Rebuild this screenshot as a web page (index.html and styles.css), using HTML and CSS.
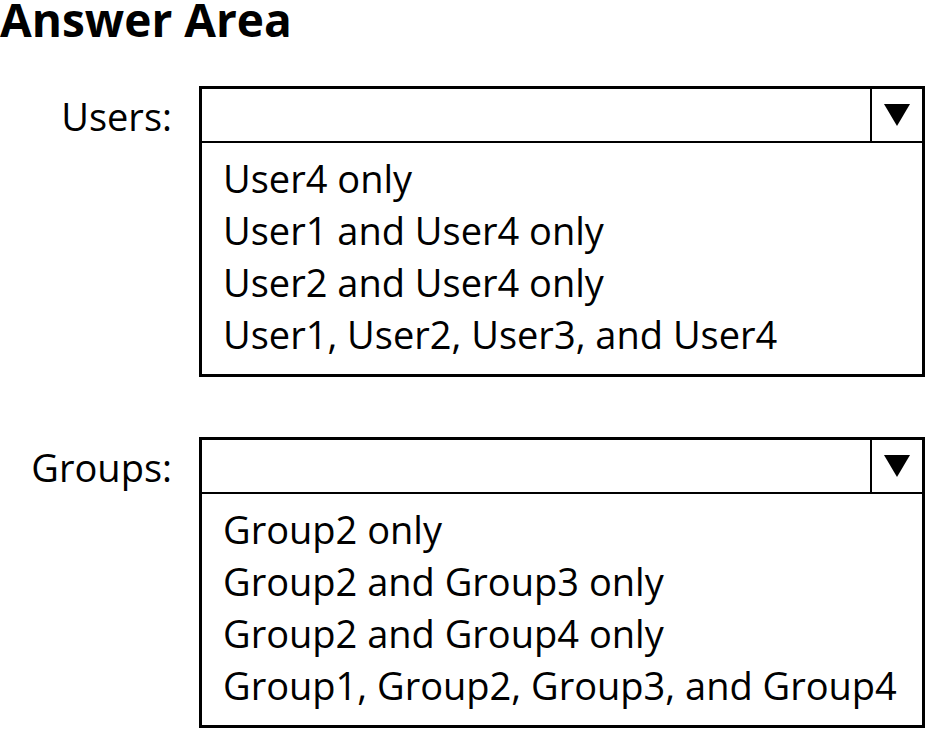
FILE: index.html
```html
<!DOCTYPE html>
<html lang="en">
<head>
    <meta charset="UTF-8">
    <meta name="viewport" content="width=device-width, initial-scale=1.0">
    <title>Answer Area</title>
    <link rel="stylesheet" href="styles.css">
</head>
<body>

    <h1 class="title">Answer Area</h1>

    <div class="answer-row">
        <div class="answer-label">Users:</div>
        <div class="dropdown">
            <div class="dropdown-head">
                <div class="dropdown-value"></div>
                <div class="dropdown-arrow">
                    <svg width="26" height="22" viewBox="0 0 26 22"><polygon points="0,0 26,0 13,22" fill="#000"/></svg>
                </div>
            </div>
            <ul class="dropdown-options">
                <li>User4 only</li>
                <li>User1 and User4 only</li>
                <li>User2 and User4 only</li>
                <li>User1, User2, User3, and User4</li>
            </ul>
        </div>
    </div>

    <div class="answer-row">
        <div class="answer-label">Groups:</div>
        <div class="dropdown">
            <div class="dropdown-head">
                <div class="dropdown-value"></div>
                <div class="dropdown-arrow">
                    <svg width="26" height="22" viewBox="0 0 26 22"><polygon points="0,0 26,0 13,22" fill="#000"/></svg>
                </div>
            </div>
            <ul class="dropdown-options">
                <li>Group2 only</li>
                <li>Group2 and Group3 only</li>
                <li>Group2 and Group4 only</li>
                <li>Group1, Group2, Group3, and Group4</li>
            </ul>
        </div>
    </div>

</body>
</html>
```

FILE: styles.css
```css
body {
    font-family: "Open Sans", "Noto Sans", sans-serif;
    background-color: #fff;
    color: #000;
    margin: 0;
    padding: 0;
}

.title {
    font-size: 46px;
    font-weight: 700;
    line-height: 38px;
    margin: 0 0 48px 0;
}

.answer-row {
    display: grid;
    grid-template-columns: 172px 726px;
    column-gap: 27px;
    align-items: start;
    margin-bottom: 60px;
    font-size: 38px;
}

.answer-row:last-child {
    margin-bottom: 0;
}

.answer-label {
    height: 55px;
    display: flex;
    align-items: center;
    justify-content: flex-end;
    padding-top: 2px;
}

.dropdown {
    border: 3px solid #000;
}

.dropdown-head {
    display: flex;
    height: 52px;
    border-bottom: 2px solid #000;
}

.dropdown-value {
    flex: 1;
}

.dropdown-arrow {
    width: 50px;
    border-left: 2px solid #000;
    display: flex;
    align-items: center;
    justify-content: center;
}

.dropdown-options {
    list-style: none;
    margin: 0;
    padding: 9px 0 14px 21px;
}

.dropdown-options li {
    line-height: 52px;
    height: 52px;
    white-space: nowrap;
}
```
